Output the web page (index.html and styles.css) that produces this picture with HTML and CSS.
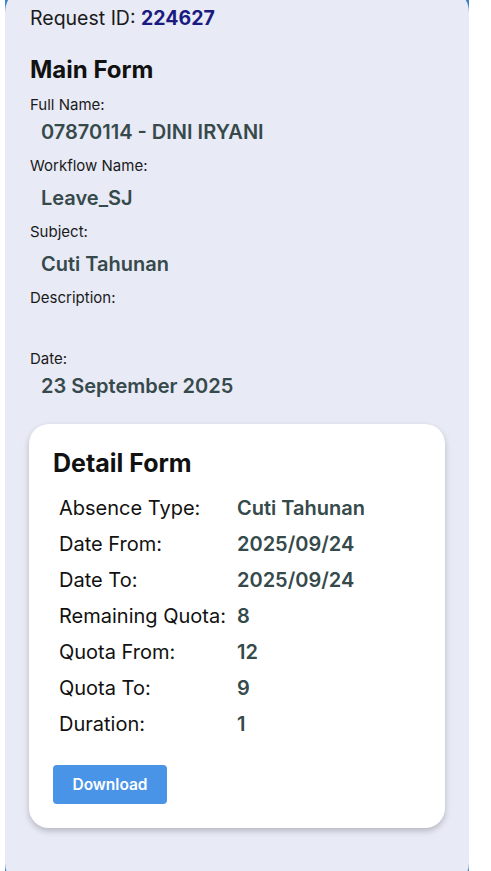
FILE: index.html
```html
<!DOCTYPE html>
<html>
<head>
<meta charset="utf-8">
<link rel="stylesheet" href="styles.css">
</head>
<body>
<div class="frame">
  <div class="panel">
    <div class="req">Request ID: <span class="req-id">224627</span></div>
    <h1 class="main-title">Main Form</h1>
    <div class="field-label">Full Name:</div>
    <div class="field-value first">07870114 - DINI IRYANI</div>
    <div class="field-label">Workflow Name:</div>
    <div class="field-value">Leave_SJ</div>
    <div class="field-label">Subject:</div>
    <div class="field-value">Cuti Tahunan</div>
    <div class="field-label">Description:</div>
    <div class="field-value empty"></div>
    <div class="field-label">Date:</div>
    <div class="field-value first">23 September 2025</div>

    <div class="card">
      <h2 class="card-title">Detail Form</h2>
      <div class="rows">
        <div class="r-label">Absence Type:</div><div class="r-value">Cuti Tahunan</div>
        <div class="r-label">Date From:</div><div class="r-value">2025/09/24</div>
        <div class="r-label">Date To:</div><div class="r-value">2025/09/24</div>
        <div class="r-label">Remaining Quota:</div><div class="r-value">8</div>
        <div class="r-label">Quota From:</div><div class="r-value">12</div>
        <div class="r-label">Quota To:</div><div class="r-value">9</div>
        <div class="r-label">Duration:</div><div class="r-value">1</div>
      </div>
      <button class="btn">Download</button>
    </div>
  </div>
</div>
</body>
</html>
```
FILE: styles.css
```css
* { box-sizing: border-box; }
html, body { margin: 0; padding: 0; background: #ffffff; }
body {
  font-family: Inter, "Noto Sans", sans-serif;
  color: #1a1a1a;
  overflow: hidden;
}
.frame {
  margin-top: -12px;
  margin-left: 5px;
  width: 464px;
  background: #3f82c6;
}
.panel {
  background: #e8eaf6;
  border-radius: 24px;
  padding: 18px 24px 59px 24px;
  height: 899px;
}
.req {
  font-size: 19.5px;
  line-height: 24px;
  padding-left: 1px;
  color: #1a1a1a;
}
.req-id {
  font-weight: 700;
  color: #1a1a80;
}
.main-title {
  margin: 26px 0 0 1px;
  font-size: 24px;
  line-height: 28px;
  font-weight: 700;
  color: #111;
}
.field-label {
  font-size: 15px;
  line-height: 18px;
  padding-left: 1px;
  color: #1a1a1a;
}
.main-title + .field-label { margin-top: 12px; }
.field-value {
  margin: 11px 0 13px 12px;
  font-size: 20px;
  line-height: 24px;
  font-weight: 600;
  color: #36494b;
}
.field-value.first { margin-top: 6px; }
.field-value.empty { min-height: 19px; }
.card {
  margin-top: 26px;
  background: #ffffff;
  border-radius: 20px;
  padding: 25px 24px 24px 24px;
  box-shadow: 0 3px 6px rgba(0, 0, 0, 0.22);
}
.card-title {
  margin: 0;
  font-size: 25px;
  line-height: 28px;
  font-weight: 700;
  color: #111;
}
.rows {
  margin-top: 19px;
  padding-left: 6px;
  display: grid;
  grid-template-columns: 178px 1fr;
  row-gap: 12px;
}
.r-label {
  font-size: 20px;
  line-height: 24px;
  color: #111;
}
.r-value {
  font-size: 20px;
  line-height: 24px;
  font-weight: 600;
  color: #36494b;
}
.btn {
  margin-top: 29px;
  display: block;
  width: 114px;
  height: 39px;
  border: none;
  border-radius: 4px;
  background: #4a94e8;
  color: #ffffff;
  font-family: Inter, "Noto Sans", sans-serif;
  font-size: 15.5px;
  font-weight: 600;
  padding: 0;
}
```
